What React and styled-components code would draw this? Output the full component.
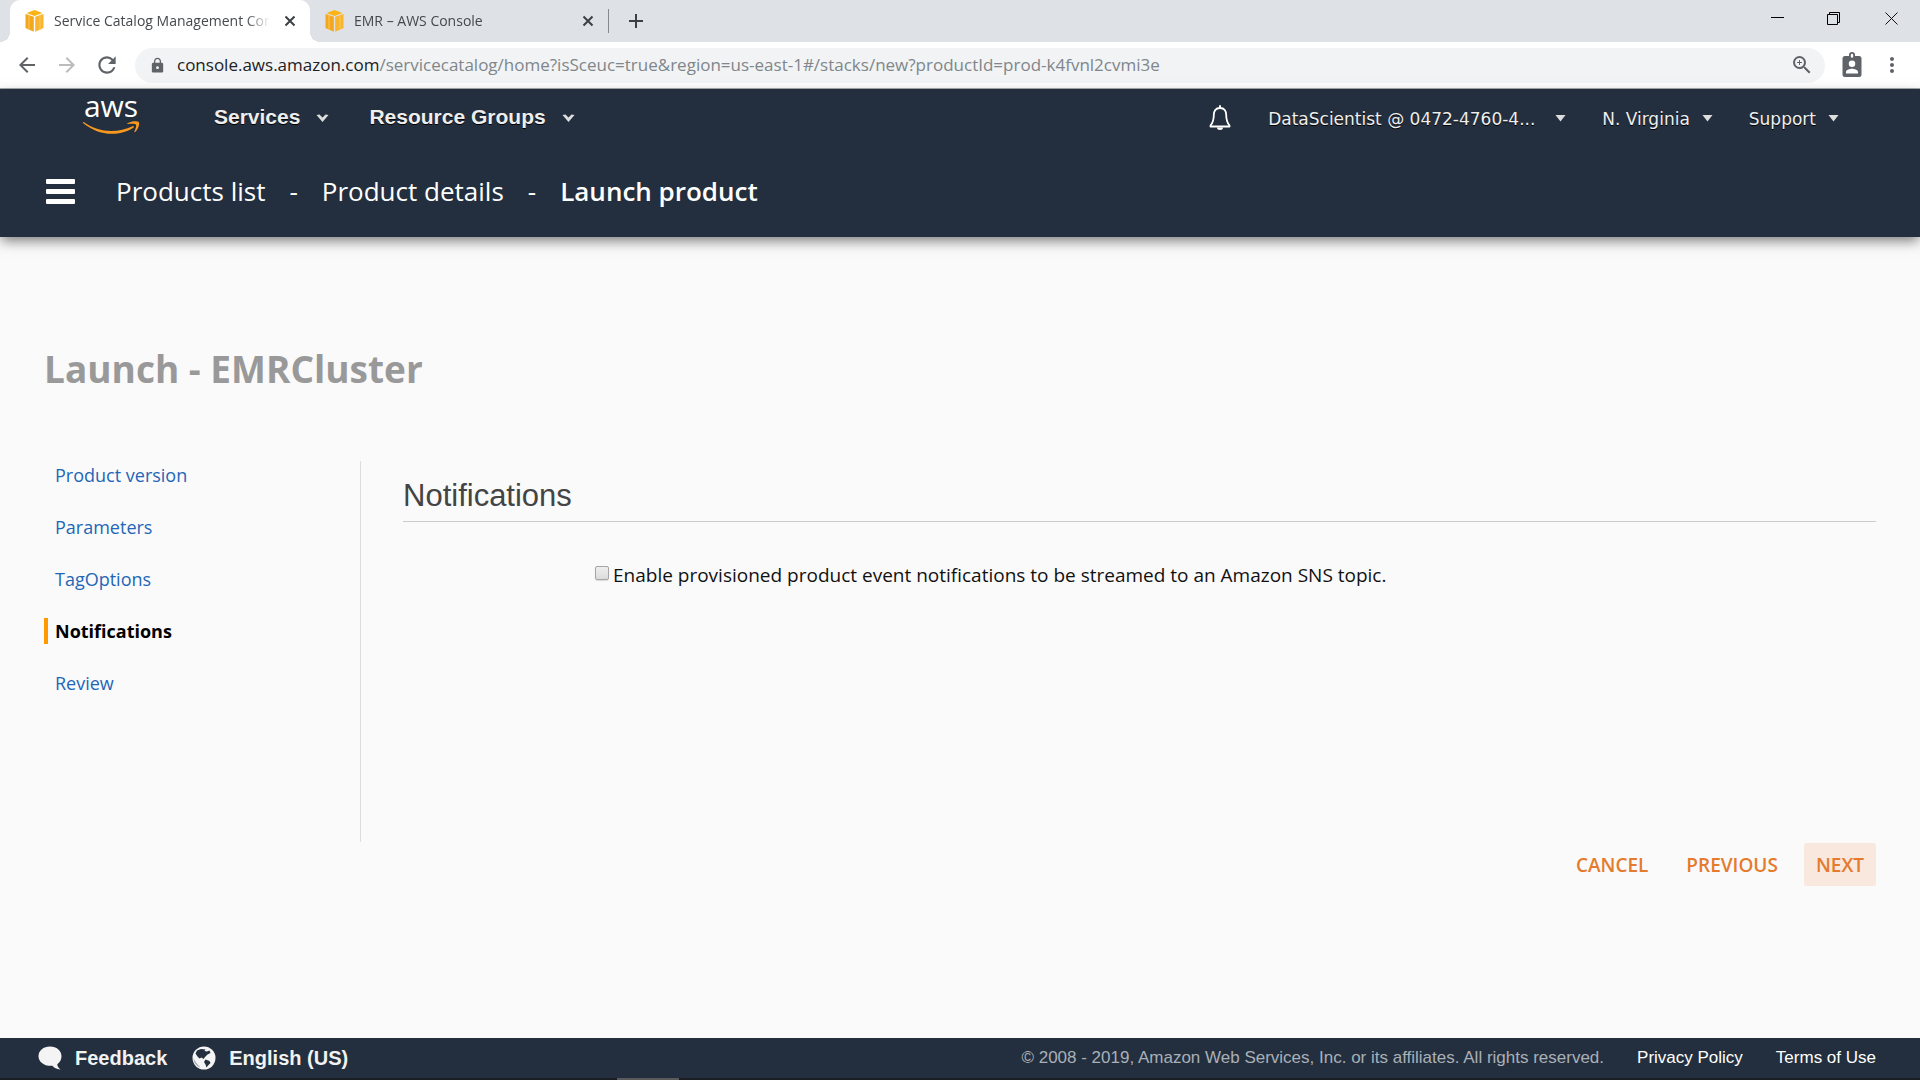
import React from "react";
import styled, { createGlobalStyle, css } from "styled-components";
import {
  MdArrowBack,
  MdArrowForward,
  MdLock,
  MdMoreVert,
  MdRefresh,
  MdZoomIn,
} from "react-icons/md";

const sans = `"Open Sans", "Noto Sans", sans-serif`;
const arial = `"Liberation Sans", Arial, sans-serif`;
const wide = `"DejaVu Sans", Verdana, sans-serif`;

const GlobalStyle = createGlobalStyle`
  *, *::before, *::after { box-sizing: border-box; }
  body { margin: 0; background: #fafafa; font-family: ${sans}; }
  button { margin: 0; padding: 0; border: 0; background: none; color: inherit; font: inherit; cursor: pointer; }
  a { color: inherit; text-decoration: none; }
  svg { display: block; flex: none; overflow: visible; }
`;

const Page = styled.div`
  display: flex;
  flex-direction: column;
  min-height: 100vh;
`;

/* ---------- browser chrome ---------- */

const TabStrip = styled.div`
  display: flex;
  height: 42px;
  padding-left: 10px;
  background: #dee1e6;
`;

const Tab = styled.div`
  position: relative;
  display: flex;
  align-items: center;
  gap: 10px;
  width: ${(p) => (p.$active ? 300 : 296)}px;
  height: 42px;
  padding: 0 ${(p) => (p.$active ? 14 : 12)}px 0 15px;
  ${(p) =>
    p.$active &&
    css`
      background: #fff;
      border-radius: 10px 10px 0 0;
      &::before,
      &::after {
        content: "";
        position: absolute;
        bottom: 0;
        width: 10px;
        height: 10px;
      }
      &::before {
        right: 100%;
        background: radial-gradient(circle at 0 0, transparent 10px, #fff 10px);
      }
      &::after {
        left: 100%;
        background: radial-gradient(circle at 100% 0, transparent 10px, #fff 10px);
      }
    `}
`;

const TabTitle = styled.button`
  flex: 1;
  min-width: 0;
  overflow: hidden;
  text-align: left;
  white-space: nowrap;
  font-size: 14px;
  line-height: 20px;
  color: #45494d;
  mask-image: linear-gradient(to right, #000 calc(100% - 28px), transparent calc(100% - 4px));
`;

const IconButton = styled.button`
  display: flex;
  align-items: center;
  justify-content: center;
  width: ${(p) => p.$size || 32}px;
  height: ${(p) => p.$size || 32}px;
  color: ${(p) => p.$color || "#5f6368"};
`;

const TabDivider = styled.span`
  width: 1px;
  height: 24px;
  margin: 9px 11px 0 2px;
  background: #85888c;
`;

const NewTab = styled(IconButton)`
  margin-top: 5px;
`;

const WindowControls = styled.div`
  display: flex;
  margin-left: auto;
`;

const WindowButton = styled.button`
  display: flex;
  align-items: center;
  justify-content: center;
  width: 57px;
  height: 37px;
`;

const Toolbar = styled.div`
  display: flex;
  align-items: center;
  gap: 8px;
  height: 47px;
  padding: 0 12px 0 11px;
  background: #fff;
  border-bottom: 1px solid #a9abae;
`;

const AddressBar = styled.div`
  display: flex;
  flex: 1;
  align-items: center;
  gap: 11px;
  height: 35px;
  margin: 0 3px 0 4px;
  padding: 0 12px 0 14px;
  border-radius: 18px;
  background: #f1f3f4;
  color: #5f6368;
`;

const Url = styled.div`
  flex: 1;
  font-size: 17px;
  line-height: 24px;
  color: #80868b;
  white-space: nowrap;
  outline: none;
`;

const Host = styled.span`
  color: #202124;
`;

/* ---------- console header ---------- */

const Header = styled.header`
  position: relative;
  background: #232f3e;
  color: #fff;
  box-shadow: 0 5px 12px -1px rgba(0, 0, 0, 0.5);
`;

const TopNav = styled.nav`
  display: flex;
  align-items: center;
  height: 56px;
  padding: 0 81px 0 82px;
`;

const LogoLink = styled.a`
  margin-right: 72px;
`;

const MenuGroup = styled.div`
  display: flex;
  align-items: center;
  gap: ${(p) => p.$gap}px;
  margin-left: ${(p) => (p.$end ? "auto" : "0")};
  padding-top: ${(p) => (p.$end ? 3 : 0)}px;
`;

const MenuButton = styled.button`
  display: flex;
  align-items: center;
  gap: ${(p) => (p.$strong ? 16 : 12)}px;
  font-family: ${(p) => (p.$strong ? arial : wide)};
  font-size: ${(p) => (p.$strong ? 21 : 17)}px;
  font-weight: ${(p) => (p.$strong ? 700 : 400)};
  line-height: 24px;
  color: #eee;
  text-shadow: 0 1px 0 #000;
`;

const AccountName = styled.span`
  width: 275px;
  text-align: left;
`;

const CrumbBar = styled.div`
  display: flex;
  align-items: center;
  gap: 41px;
  height: 92px;
  padding: 0 46px;
`;

const Burger = styled.button`
  display: flex;
  flex-direction: column;
  gap: 5px;
  width: 29px;
`;

const BurgerBar = styled.span`
  width: 100%;
  height: 5px;
  border-radius: 1px;
  background: #fff;
`;

const Crumbs = styled.nav`
  display: flex;
  gap: 24px;
  font-size: 26px;
  line-height: 36px;
`;

const CurrentCrumb = styled.span`
  font-weight: 600;
`;

/* ---------- wizard ---------- */

const Main = styled.main`
  flex: 1;
  padding: 107px 44px 40px;
`;

const Title = styled.h1`
  margin: 0 0 67px;
  font-size: 37px;
  font-weight: 700;
  line-height: 50px;
  color: #999;
`;

const Wizard = styled.div`
  display: grid;
  grid-template-columns: 317px 1fr;
  min-height: 381px;
`;

const Steps = styled.nav`
  display: flex;
  flex-direction: column;
  gap: 26px;
  padding-top: 1px;
  border-right: 1px solid #ddd;
`;

const Step = styled.a`
  padding-left: 7px;
  border-left: 4px solid ${(p) => (p.$current ? "#ff9900" : "transparent")};
  font-size: 18px;
  font-weight: ${(p) => (p.$current ? 700 : 400)};
  line-height: 26px;
  color: ${(p) => (p.$current ? "#000" : "#1f66b8")};
`;

const Panel = styled.section`
  padding: 15px 0 0 42px;
`;

const PanelTitle = styled.h2`
  margin: 0 0 40px;
  padding-bottom: 5px;
  border-bottom: 1px solid #ccc;
  font-family: ${arial};
  font-size: 31px;
  font-weight: 400;
  line-height: 40px;
  color: #444;
`;

const Option = styled.label`
  display: flex;
  gap: 4px;
  margin-left: 192px;
  font-size: 19px;
  font-weight: 500;
  line-height: 26px;
  color: #111;
`;

const Checkbox = styled.input`
  appearance: none;
  flex: none;
  width: 14px;
  height: 14px;
  margin: 4px 0 0;
  border: 1px solid #a5a5a5;
  border-radius: 2px;
  background: linear-gradient(#eee, #dcdcdc);
  box-shadow: 0 1px 1px rgba(0, 0, 0, 0.12);
  &:checked {
    background: #777;
  }
`;

const Actions = styled.div`
  display: flex;
  justify-content: flex-end;
  gap: 14px;
  padding-top: 1px;
`;

const Action = styled.button`
  height: 43px;
  padding: 0 12px;
  border-radius: 2px;
  background: ${(p) => (p.$highlighted ? "#f8e8dd" : "transparent")};
  font-size: 19px;
  font-weight: 600;
  line-height: 26px;
  color: #e47b2e;
`;

/* ---------- footer ---------- */

const Footer = styled.footer`
  display: flex;
  align-items: center;
  gap: 33px;
  height: 40px;
  padding: 0 44px 0 38px;
  background: #232f3e;
  font-family: ${arial};
  font-size: 17px;
  line-height: 24px;
  color: #fff;
`;

const FooterTools = styled.div`
  display: flex;
  gap: 25px;
  margin-right: auto;
`;

const FooterButton = styled.button`
  display: flex;
  align-items: center;
  gap: 13px;
  font-size: 20px;
  font-weight: 700;
  color: #f2f2f2;
`;

const Copyright = styled.span`
  color: #a9b0b7;
`;

const Taskbar = styled.div`
  display: flex;
  height: 2px;
  padding-left: 617px;
  background: #1b1e22;
`;

const TaskbarMark = styled.span`
  width: 62px;
  background: #5a5a5a;
`;

/* ---------- drawings ---------- */

const Cube = () => (
  <svg width="19" height="22" viewBox="0 0 19 22">
    <path d="M9.500 0 L17.500 3 L9.500 6 L1.500 3Z" fill="#fbb416" />
    <path d="M0.500 4 L8.800 6.800 V21.800 L0.500 18Z" fill="#f3a71c" />
    <path d="M18.500 4 L10.200 6.800 V21.800 L18.500 18Z" fill="#f9b52e" />
    <path d="M4 4.500V20M15 4.500V20" stroke="#fcc75c" strokeWidth="1" />
  </svg>
);

const CloseMark = () => (
  <svg width="10" height="12" viewBox="0 0 10 12">
    <path d="M0.500 1.500 L9.500 10.500 M9.500 1.500 L0.500 10.500" stroke="#3c4043" strokeWidth="2" />
  </svg>
);

const Plus = () => (
  <svg width="16" height="16" viewBox="0 0 16 16">
    <path d="M8 1V15M1 8H15" stroke="#3c4043" strokeWidth="2" />
  </svg>
);

const Badge = () => (
  <svg width="20" height="26" viewBox="0 0 20 26">
    <path
      fillRule="evenodd"
      fill="#5f6368"
      d="M3 4H7V3A3 3 0 0 1 13 3V4H17A2.500 2.500 0 0 1 19.500 6.500V22.500A2.500 2.500 0 0 1 17 25H3A2.500 2.500 0 0 1 0.500 22.500V6.500A2.500 2.500 0 0 1 3 4ZM10 1.800A1.200 1.200 0 0 0 8.800 3V4.500A1.200 1.200 0 0 0 11.200 4.500V3A1.200 1.200 0 0 0 10 1.800ZM10 8.500A3.200 3.200 0 0 0 10 15A3.200 3.200 0 0 0 10 8.500ZM4 21.500H16V20C16 17.800 12 16.700 10 16.700S4 17.800 4 20Z"
    />
  </svg>
);

const AwsLogo = () => (
  <svg width="60" height="40" viewBox="0 0 60 40" role="img" aria-label="aws">
    <text x="29" y="20" textAnchor="middle" fontFamily="Open Sans" fontSize="30" fontWeight="500" fill="#fff">
      aws
    </text>
    <path
      d="M1.500 25C10 31 20 34 29 34C37 34 44 32 50.500 29.200C51.800 28.700 52.500 30 51.400 30.800C45 35 37.500 36.800 30 36.800C19 36.800 9 32.500 1.300 26.200C0.600 25.500 0.900 24.700 1.500 25Z"
      fill="#f7981f"
    />
    <path
      d="M45.500 26.200C49 23.800 55 23.700 56.600 24.800C58 26.400 56.600 32 53.200 35C52.700 35.400 52.200 35.100 52.400 34.500C53.500 31.900 54.600 28.800 54 27.600C53.100 26.500 48.800 26.600 46 27C45.200 27.100 45 26.600 45.500 26.200Z"
      fill="#f7981f"
    />
  </svg>
);

const Chevron = () => (
  <svg width="13" height="10" viewBox="0 0 13 10">
    <path d="M0.500 3L3.500 2.500L6.500 5.500L9.500 2.500L12.500 3L6.500 10Z" fill="#ddd" />
  </svg>
);

const Caret = () => (
  <svg width="11" height="10" viewBox="0 0 11 10">
    <path d="M0.500 1H10.500L5.500 7.500Z" fill="#ddd" />
  </svg>
);

const Bell = () => (
  <svg width="22" height="26" viewBox="0 0 22 26">
    <path
      d="M11 2C6.500 2 4.800 5 4.800 9C4.800 14 4 16.500 1.500 19.500V20.500H20.500V19.500C18 16.500 17.200 14 17.200 9C17.200 5 15.500 2 11 2Z"
      fill="none"
      stroke="#fff"
      strokeWidth="1.800"
      strokeLinejoin="round"
    />
    <path d="M11 0V2" stroke="#fff" strokeWidth="2" strokeLinecap="round" />
    <path d="M8 21.500H14A3 2.500 0 0 1 8 21.500Z" fill="#fff" />
  </svg>
);

const Bubble = () => (
  <svg width="24" height="24" viewBox="0 0 24 24">
    <path
      d="M12 0.500C18.500 0.500 23.500 4.600 23.500 10.200C23.500 13.800 21.600 16.600 19.300 18.200C19.400 20.200 20.400 22 22.500 23.400C18.800 23.500 16 21.900 14.500 19.800C6.500 20.500 0.500 16 0.500 10.200C0.500 4.600 5.500 0.500 12 0.500Z"
      fill="#f4f4f4"
    />
  </svg>
);

const Globe = () => (
  <svg width="24" height="24" viewBox="0 0 24 24">
    <circle cx="12" cy="12" r="11.500" fill="#f4f4f4" />
    <path
      d="M5 4.500L9 3L13.500 3.500L12.500 5L15 5.500L17.500 4.500L18.500 7L15.500 8.500L13 11L11.500 13L9.500 11.500L7.500 12.500L5.500 10.500L3.500 7.500Z"
      fill="#232f3e"
    />
    <path d="M13.500 13.500L17.500 15L18.500 17L16 19.500L14.500 21.500L13.500 18.500L12 16Z" fill="#232f3e" />
    <path d="M1.500 12C2.500 15 5 18 8.500 21.500C4.800 20.500 1.500 16.500 1.500 12Z" fill="#9fa5ac" />
  </svg>
);

const Minimize = () => (
  <svg width="13" height="13" viewBox="0 0 13 13">
    <path d="M0 5.500H13" stroke="#000" />
  </svg>
);

const Restore = () => (
  <svg width="15" height="13" viewBox="0 0 15 13">
    <path d="M0.500 2.500H10.500V12.500H0.500ZM2.500 2.500V0.500H12.500V10.500H10.500" fill="none" stroke="#000" />
  </svg>
);

const CloseWindow = () => (
  <svg width="13" height="13" viewBox="0 0 13 13">
    <path d="M0.500 0.500L12.500 12.500M12.500 0.500L0.500 12.500" stroke="#111" />
  </svg>
);

const steps = ["Product version", "Parameters", "TagOptions", "Notifications", "Review"];

export default function App() {
  return (
    <Page>
      <GlobalStyle />
      <div>
        <TabStrip>
          <Tab $active>
            <Cube />
            <TabTitle>Service Catalog Management Console</TabTitle>
            <IconButton $size={12} aria-label="Close tab">
              <CloseMark />
            </IconButton>
          </Tab>
          <Tab>
            <Cube />
            <TabTitle>EMR – AWS Console</TabTitle>
            <IconButton $size={12} aria-label="Close tab">
              <CloseMark />
            </IconButton>
          </Tab>
          <TabDivider />
          <NewTab aria-label="New tab">
            <Plus />
          </NewTab>
          <WindowControls>
            <WindowButton aria-label="Minimize">
              <Minimize />
            </WindowButton>
            <WindowButton aria-label="Restore">
              <Restore />
            </WindowButton>
            <WindowButton aria-label="Close">
              <CloseWindow />
            </WindowButton>
          </WindowControls>
        </TabStrip>
        <Toolbar>
          <IconButton aria-label="Back">
            <MdArrowBack size={24} />
          </IconButton>
          <IconButton aria-label="Forward" $color="#babcbe">
            <MdArrowForward size={24} />
          </IconButton>
          <IconButton aria-label="Reload">
            <MdRefresh size={26} />
          </IconButton>
          <AddressBar>
            <MdLock size={17} />
            <Url role="textbox" aria-label="Address" contentEditable suppressContentEditableWarning spellCheck={false}>
              <Host>console.aws.amazon.com</Host>
              /servicecatalog/home?isSceuc=true&amp;region=us-east-1#/stacks/new?productId=prod-k4fvnl2cvmi3e
            </Url>
            <IconButton $size={22} aria-label="Zoom">
              <MdZoomIn size={24} />
            </IconButton>
          </AddressBar>
          <IconButton aria-label="Profile">
            <Badge />
          </IconButton>
          <IconButton aria-label="Browser menu">
            <MdMoreVert size={24} />
          </IconButton>
        </Toolbar>
      </div>

      <Header>
        <TopNav>
          <LogoLink href="#home">
            <AwsLogo />
          </LogoLink>
          <MenuGroup $gap={40}>
            <MenuButton $strong>
              Services <Chevron />
            </MenuButton>
            <MenuButton $strong>
              Resource Groups <Chevron />
            </MenuButton>
          </MenuGroup>
          <MenuGroup $gap={36} $end>
            <IconButton $size={24} aria-label="Notifications">
              <Bell />
            </IconButton>
            <MenuButton>
              <AccountName>DataScientist @ 0472-4760-4...</AccountName> <Caret />
            </MenuButton>
            <MenuButton>
              N. Virginia <Caret />
            </MenuButton>
            <MenuButton>
              Support <Caret />
            </MenuButton>
          </MenuGroup>
        </TopNav>
        <CrumbBar>
          <Burger aria-label="Open menu">
            <BurgerBar />
            <BurgerBar />
            <BurgerBar />
          </Burger>
          <Crumbs aria-label="Breadcrumb">
            <a href="#products">Products list</a>
            <span>-</span>
            <a href="#details">Product details</a>
            <span>-</span>
            <CurrentCrumb>Launch product</CurrentCrumb>
          </Crumbs>
        </CrumbBar>
      </Header>

      <Main>
        <Title>Launch - EMRCluster</Title>
        <Wizard>
          <Steps aria-label="Steps">
            {steps.map((name) => (
              <Step key={name} href="#step" $current={name === "Notifications"}>
                {name}
              </Step>
            ))}
          </Steps>
          <Panel>
            <PanelTitle>Notifications</PanelTitle>
            <Option htmlFor="sns">
              <Checkbox id="sns" type="checkbox" />
              Enable provisioned product event notifications to be streamed to an Amazon SNS topic.
            </Option>
          </Panel>
        </Wizard>
        <Actions>
          <Action>CANCEL</Action>
          <Action>PREVIOUS</Action>
          <Action $highlighted>NEXT</Action>
        </Actions>
      </Main>

      <Footer>
        <FooterTools>
          <FooterButton>
            <Bubble /> Feedback
          </FooterButton>
          <FooterButton>
            <Globe /> English (US)
          </FooterButton>
        </FooterTools>
        <Copyright>© 2008 - 2019, Amazon Web Services, Inc. or its affiliates. All rights reserved.</Copyright>
        <a href="#privacy">Privacy Policy</a>
        <a href="#terms">Terms of Use</a>
      </Footer>
      <Taskbar>
        <TaskbarMark />
      </Taskbar>
    </Page>
  );
}
